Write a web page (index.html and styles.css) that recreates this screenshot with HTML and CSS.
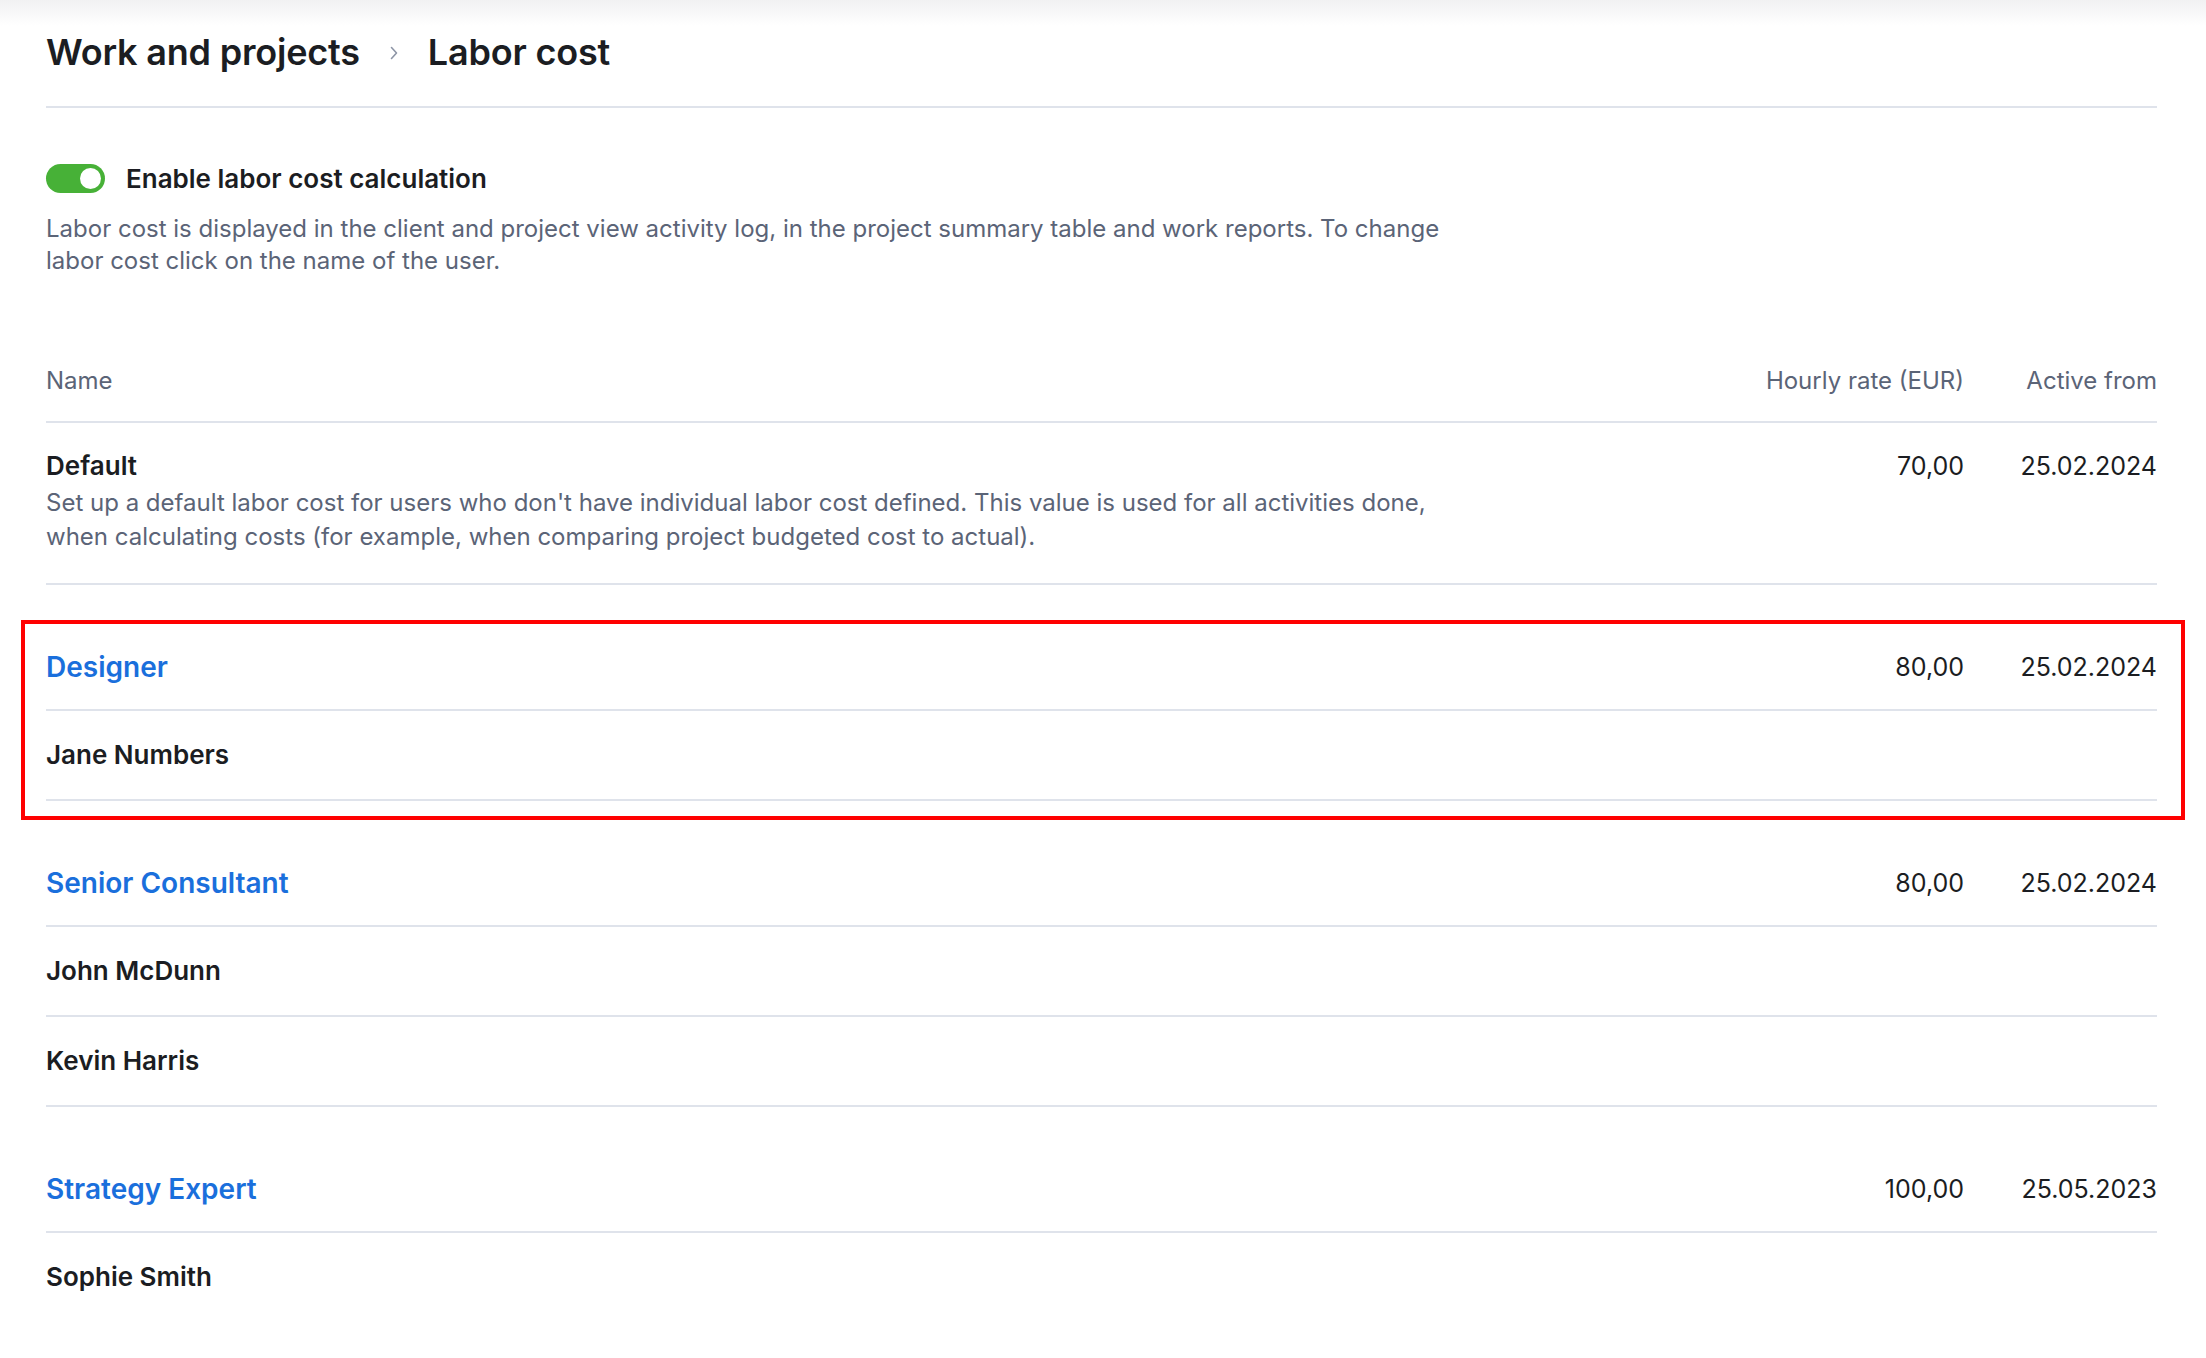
FILE: index.html
```html
<!DOCTYPE html>
<html>
<head>
    <title>Labor cost</title>
    <link rel="stylesheet" href="styles.css">
</head>
<body>
    <div class="page">
        <div class="breadcrumb">
            <span class="crumb">Work and projects</span>
            <svg class="chevron" viewBox="0 0 10 16" width="10" height="16">
                <path d="M2.5 2.5 L7.5 8 L2.5 13.5" fill="none" stroke="#8d95a6" stroke-width="1.6" stroke-linecap="round" stroke-linejoin="round"/>
            </svg>
            <span class="crumb">Labor cost</span>
        </div>

        <div class="setting">
            <div class="toggle-row">
                <span class="toggle on"><span class="knob"></span></span>
                <span class="toggle-label">Enable labor cost calculation</span>
            </div>
            <p class="hint">Labor cost is displayed in the client and project view activity log, in the project summary table and work reports. To change labor cost click on the name of the user.</p>
        </div>

        <div class="cost-table">
            <div class="row head">
                <div>Name</div>
                <div class="num">Hourly rate (EUR)</div>
                <div class="num">Active from</div>
            </div>

            <div class="row default">
                <div>
                    <div class="name">Default</div>
                    <div class="hint">Set up a default labor cost for users who don't have individual labor cost defined. This value is used for all activities done, when calculating costs (for example, when comparing project budgeted cost to actual).</div>
                </div>
                <div class="num value">70,00</div>
                <div class="num value">25.02.2024</div>
            </div>

            <div class="group marked">
                <div class="row group-head">
                    <a class="role" href="#">Designer</a>
                    <div class="num value">80,00</div>
                    <div class="num value">25.02.2024</div>
                </div>
                <div class="row member">
                    <div class="name">Jane Numbers</div>
                    <div></div>
                    <div></div>
                </div>
            </div>

            <div class="group">
                <div class="row group-head">
                    <a class="role" href="#">Senior Consultant</a>
                    <div class="num value">80,00</div>
                    <div class="num value">25.02.2024</div>
                </div>
                <div class="row member">
                    <div class="name">John McDunn</div>
                    <div></div>
                    <div></div>
                </div>
                <div class="row member">
                    <div class="name">Kevin Harris</div>
                    <div></div>
                    <div></div>
                </div>
            </div>

            <div class="group">
                <div class="row group-head">
                    <a class="role" href="#">Strategy Expert</a>
                    <div class="num value">100,00</div>
                    <div class="num value">25.05.2023</div>
                </div>
                <div class="row member last">
                    <div class="name">Sophie Smith</div>
                    <div></div>
                    <div></div>
                </div>
            </div>
        </div>
    </div>
</body>
</html>
```

FILE: styles.css
```css
body {
    margin: 0;
    font-family: Inter, "Noto Sans", sans-serif;
    color: #1b1d22;
    background: linear-gradient(#f1f1f2, #ffffff 26px);
    background-repeat: no-repeat;
    background-color: #ffffff;
}
.page {
    padding: 0 49px 0 46px;
}
.breadcrumb {
    display: flex;
    align-items: center;
    gap: 29px;
    padding: 32px 0 34px;
    border-bottom: 2px solid #dfe3eb;
}
.crumb {
    font-size: 36px;
    line-height: 40px;
    font-weight: 600;
    letter-spacing: -0.2px;
}
.chevron {
    margin-top: 2px;
}
.setting {
    padding-top: 55px;
}
.toggle-row {
    display: flex;
    align-items: center;
    gap: 21px;
}
.toggle {
    width: 59px;
    height: 29px;
    border-radius: 15px;
    background-color: #47b137;
    display: flex;
    align-items: center;
    justify-content: flex-end;
    padding: 0 4px;
    box-sizing: border-box;
}
.knob {
    width: 21px;
    height: 21px;
    border-radius: 50%;
    background-color: #ffffff;
}
.toggle-label {
    font-size: 26px;
    font-weight: 600;
}
.hint {
    color: #5b6477;
    font-size: 24px;
    line-height: 34px;
    max-width: 1410px;
}
.setting .hint {
    margin: 19px 0 0;
    line-height: 32px;
}
.cost-table {
    margin-top: 88px;
}
.row {
    display: grid;
    grid-template-columns: 1fr 220px 193px;
    align-items: start;
    border-bottom: 2px solid #dfe3eb;
}
.num {
    text-align: right;
}
.row.head {
    color: #5b6477;
    font-size: 24px;
    line-height: 32px;
    padding-bottom: 24px;
}
.row.default {
    padding: 27px 0 29px;
}
.row.default .hint {
    margin-top: 4px;
}
.name {
    font-size: 26px;
    line-height: 32px;
    font-weight: 600;
}
.value {
    font-size: 25px;
    line-height: 32px;
}
.group {
    position: relative;
    margin-top: 40px;
}
.group.marked::after {
    content: "";
    position: absolute;
    top: -5px;
    bottom: -19px;
    left: -25px;
    right: -28px;
    border: 4px solid #ff0000;
    pointer-events: none;
}
.group-head {
    padding: 26px 0;
    align-items: center;
}
.role {
    color: #1a6fdc;
    font-size: 28px;
    line-height: 32px;
    font-weight: 600;
    text-decoration: none;
    justify-self: start;
}
.member {
    padding: 28px 0;
}
.member.last {
    border-bottom: none;
}
```
